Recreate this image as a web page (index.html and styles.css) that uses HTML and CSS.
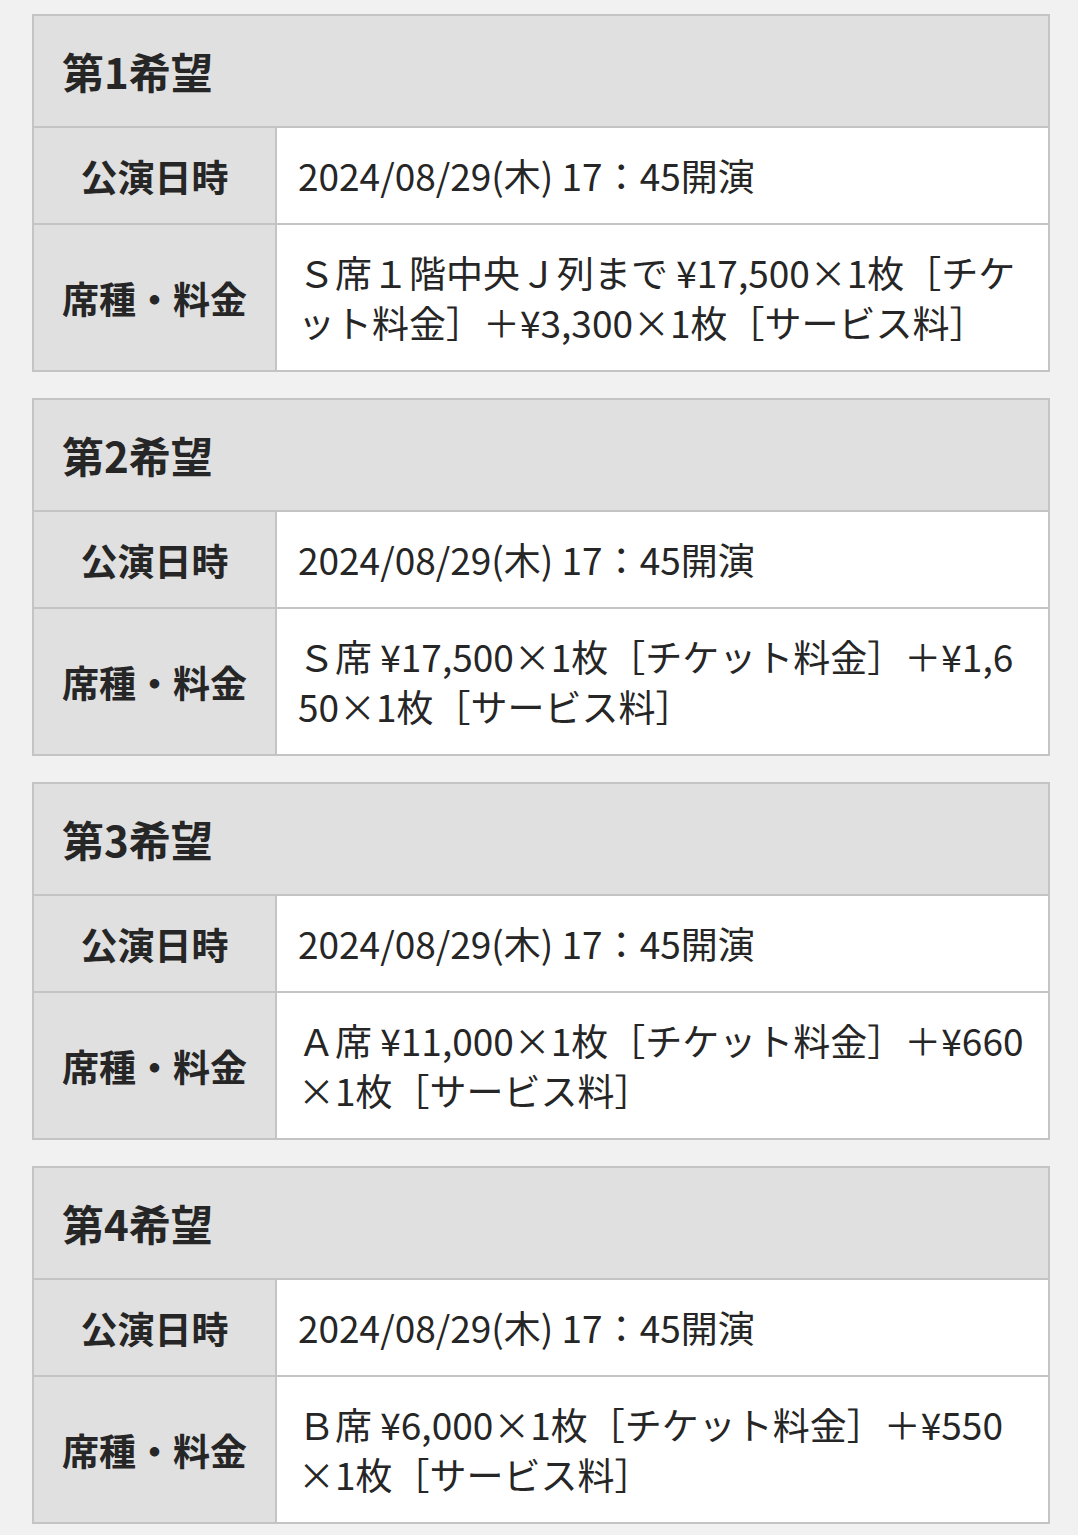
FILE: index.html
```html
<!DOCTYPE html>
<html lang="ja">
<head>
<meta charset="utf-8">
<link rel="stylesheet" href="styles.css">
</head>
<body>
<main class="list">
  <table class="wish">
    <colgroup><col class="col-label"><col class="col-value"></colgroup>
    <tr><th class="wish-title" colspan="2">第1希望</th></tr>
    <tr><th class="label">公演日時</th><td class="value">2024/08/29(木) 17：45開演</td></tr>
    <tr><th class="label">席種・料金</th><td class="value">Ｓ席１階中央Ｊ列まで ¥17,500×1枚［チケット料金］＋¥3,300×1枚［サービス料］</td></tr>
  </table>
  <table class="wish">
    <colgroup><col class="col-label"><col class="col-value"></colgroup>
    <tr><th class="wish-title" colspan="2">第2希望</th></tr>
    <tr><th class="label">公演日時</th><td class="value">2024/08/29(木) 17：45開演</td></tr>
    <tr><th class="label">席種・料金</th><td class="value">Ｓ席 ¥17,500×1枚［チケット料金］＋¥1,650×1枚［サービス料］</td></tr>
  </table>
  <table class="wish">
    <colgroup><col class="col-label"><col class="col-value"></colgroup>
    <tr><th class="wish-title" colspan="2">第3希望</th></tr>
    <tr><th class="label">公演日時</th><td class="value">2024/08/29(木) 17：45開演</td></tr>
    <tr><th class="label">席種・料金</th><td class="value">Ａ席 ¥11,000×1枚［チケット料金］＋¥660×1枚［サービス料］</td></tr>
  </table>
  <table class="wish">
    <colgroup><col class="col-label"><col class="col-value"></colgroup>
    <tr><th class="wish-title" colspan="2">第4希望</th></tr>
    <tr><th class="label">公演日時</th><td class="value">2024/08/29(木) 17：45開演</td></tr>
    <tr><th class="label">席種・料金</th><td class="value">Ｂ席 ¥6,000×1枚［チケット料金］＋¥550×1枚［サービス料］</td></tr>
  </table>
</main>
</body>
</html>
```
FILE: styles.css
```css
html, body {
  margin: 0;
  padding: 0;
  background: #f1f1f1;
}
body {
  font-family: "Noto Sans CJK JP", "Noto Sans", sans-serif;
  color: #262626;
}
.list {
  display: flex;
  flex-direction: column;
  gap: 26px;
  padding: 14px 0 0 32px;
}
.wish {
  width: 1018px;
  border-collapse: collapse;
  table-layout: fixed;
  background: #fff;
}
.col-label {
  width: 243px;
}
.wish th, .wish td {
  border: 2px solid #c4c4c4;
}
.wish-title {
  background: #e0e0e0;
  text-align: left;
  font-size: 42px;
  font-weight: 700;
  height: 112px;
  padding: 0 0 0 28px;
  line-height: 50px;
  box-sizing: border-box;
}
.label {
  background: #e0e0e0;
  font-size: 37px;
  font-weight: 700;
  text-align: center;
  padding: 0;
  line-height: 50px;
}
.value {
  font-size: 37px;
  font-weight: 400;
  line-height: 50px;
  padding: 22px 18px 23px 21px;
  word-break: break-all;
  line-break: anywhere;
}
```
